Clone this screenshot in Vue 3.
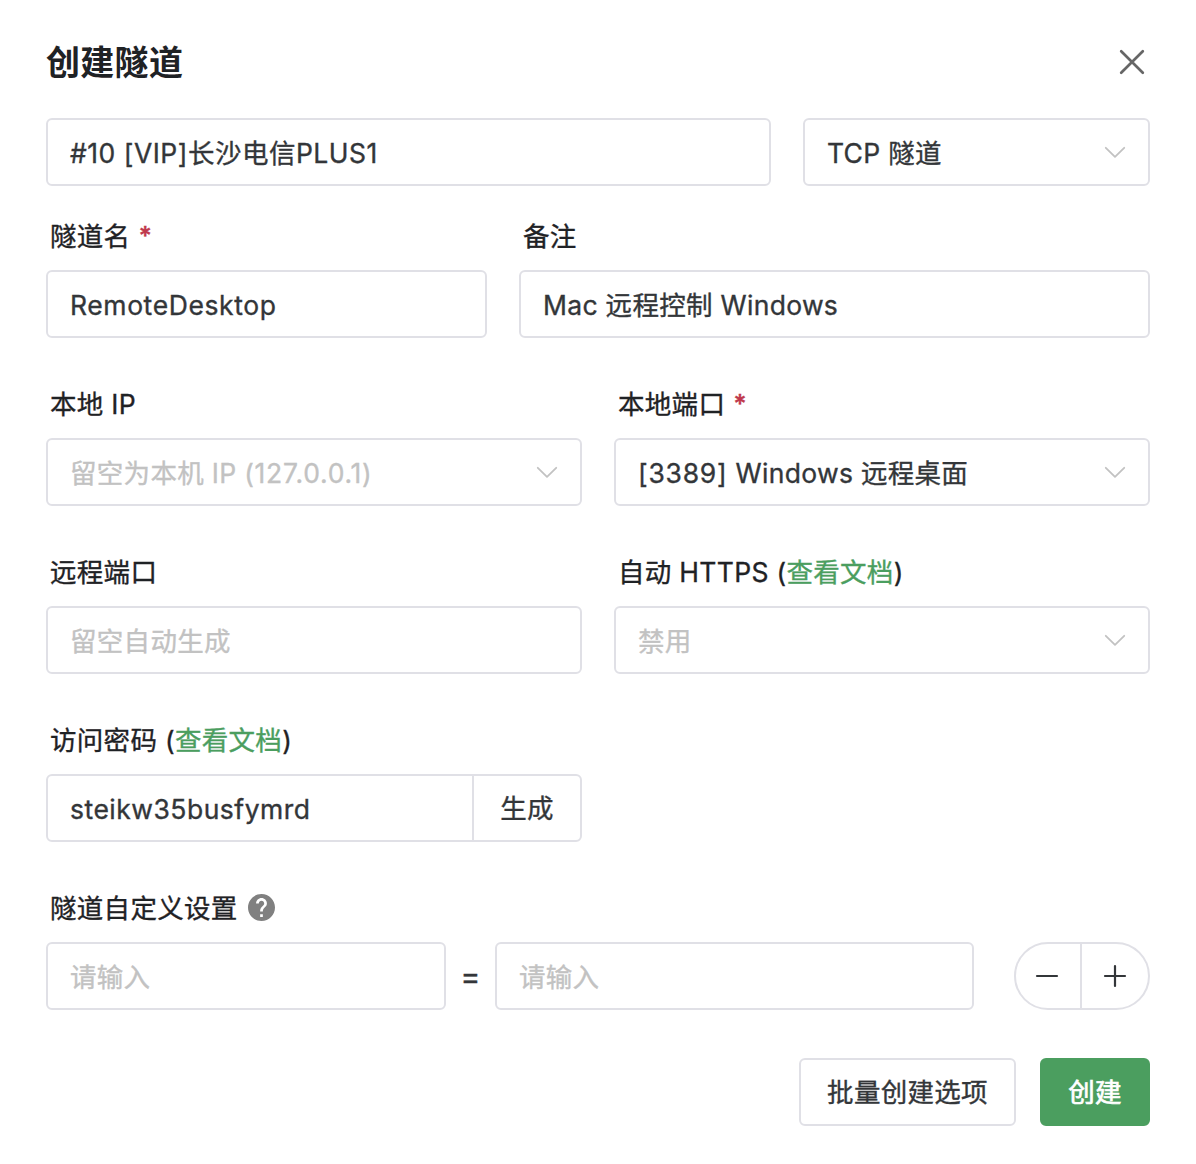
<template>
  <div class="modal">
    <header class="header">
      <h1>创建隧道</h1>
      <svg class="close" viewBox="0 0 28 28"><path d="M3.2 3.2L24.8 24.8M24.8 3.2L3.2 24.8" /></svg>
    </header>

    <div class="row">
      <div class="box node"><span class="loose">#10 [VIP]长沙电信PLUS1</span></div>
      <div class="box type">
        <span>TCP 隧道</span>
        <svg class="arrow" viewBox="0 0 22 12"><path d="M1.8 1.8L11 10.8L20.2 1.8" /></svg>
      </div>
    </div>

    <div class="row labels first">
      <div class="name"><span>隧道名</span><i>*</i></div>
      <div class="remark"><span>备注</span></div>
    </div>
    <div class="row">
      <div class="box name"><span class="wide">RemoteDesktop</span></div>
      <div class="box remark"><span>Mac 远程控制 Windows</span></div>
    </div>

    <template v-for="(group, g) in groups" :key="g">
      <div class="row labels">
        <div v-for="field in group" :key="field.label" class="half">
          <span>{{ field.label }}<template v-if="field.doc"> (<a>查看文档</a>)</template></span>
          <i v-if="field.required">*</i>
        </div>
      </div>
      <div class="row">
        <div v-for="field in group" :key="field.label" class="box half">
          <span :class="{ placeholder: field.empty }"
            ><template v-for="(part, p) in field.parts" :key="p"
              ><span :class="{ digits: /\d/.test(part) }">{{ part }}</span></template
            ></span
          >
          <svg v-if="field.select" class="arrow" viewBox="0 0 22 12"><path d="M1.8 1.8L11 10.8L20.2 1.8" /></svg>
        </div>
      </div>
    </template>

    <div class="row labels">
      <div class="half"><span>访问密码 (<a>查看文档</a>)</span></div>
    </div>
    <div class="row joined">
      <div class="box password"><span class="loose">steikw35busfymrd</span></div>
      <button class="generate"><span>生成</span></button>
    </div>

    <div class="row labels">
      <div class="half">
        <span>隧道自定义设置</span>
        <svg class="help" viewBox="2 2 20 20">
          <path
            d="M12 2C6.48 2 2 6.48 2 12s4.48 10 10 10 10-4.48 10-10S17.52 2 12 2zm1 17h-2v-2h2v2zm2.07-7.75l-.9.92C13.45 12.9 13 13.5 13 15h-2v-.5c0-1.1.45-2.1 1.17-2.83l1.24-1.26c.37-.36.59-.86.59-1.41 0-1.1-.9-2-2-2s-2 .9-2 2H8c0-2.21 1.79-4 4-4s4 1.79 4 4c0 .88-.36 1.68-.93 2.25z"
          />
        </svg>
      </div>
    </div>
    <div class="row settings">
      <div class="box key"><span class="placeholder">请输入</span></div>
      <span class="equals">=</span>
      <div class="box value"><span class="placeholder">请输入</span></div>
      <div class="stepper">
        <button><svg viewBox="0 0 26 26"><path d="M3 13H23" /></svg></button>
        <button><svg viewBox="0 0 26 26"><path d="M3 13H23M13 3V23" /></svg></button>
      </div>
    </div>

    <footer class="footer">
      <button class="batch"><span>批量创建选项</span></button>
      <button class="create"><span>创建</span></button>
    </footer>
  </div>
</template>

<script setup>
const groups = [
  [
    { label: "本地 IP", parts: ["留空为本机 IP ", "(127.0.0.1)"], empty: true, select: true },
    { label: "本地端口", parts: ["[3389] ", "Windows 远程桌面"], required: true, select: true },
  ],
  [
    { label: "远程端口", parts: ["留空自动生成"], empty: true },
    { label: "自动 HTTPS", parts: ["禁用"], doc: true, empty: true, select: true },
  ],
];
</script>

<style>
body {
  margin: 0;
  background: #fff;
}
</style>

<style scoped>
.modal {
  box-sizing: border-box;
  width: 1196px;
  height: 1164px;
  padding: 38px 46px 0;
  color: #333639;
  background: #fff;
  font-family: Inter, "Noto Sans CJK SC", sans-serif;
  font-size: 26.5px;
  line-height: 40px;
  letter-spacing: 0.3px;
  -webkit-text-stroke: 0.35px currentColor;
  overflow: hidden;
  white-space: nowrap;
}
.header {
  display: flex;
  justify-content: space-between;
  height: 80px;
}
h1 {
  margin: 0;
  color: #1f2225;
  font-size: 34px;
  font-weight: 700;
  line-height: 50px;
  -webkit-text-stroke: 0;
}
.close {
  width: 28px;
  height: 28px;
  margin: 10px 4px 0 0;
}
svg {
  display: block;
  flex: none;
  fill: none;
  stroke: #666;
  stroke-width: 2.7;
  stroke-linecap: round;
  stroke-linejoin: round;
}
.row {
  display: flex;
  gap: 32px;
}
.box {
  display: flex;
  box-sizing: border-box;
  align-items: center;
  justify-content: space-between;
  height: 68px;
  padding: 2px 22px 0;
  border: 2px solid #e0e0e6;
  border-radius: 6px;
}
.box span {
  white-space: pre;
}
.loose {
  letter-spacing: 0.5px;
}
.wide {
  letter-spacing: 0.6px;
}
.digits {
  letter-spacing: 0.75px;
}
.node {
  width: 725px;
}
.type {
  width: 347px;
}
.name {
  width: 441px;
}
.remark {
  width: 631px;
}
.half {
  width: 536px;
}
.arrow {
  width: 22px;
  height: 12px;
  margin: -2px 0 0;
  stroke: #c2c2c2;
  stroke-width: 1.8;
}
.labels {
  box-sizing: border-box;
  height: 100px;
  padding-top: 46px;
  color: #1f2225;
}
.labels.first {
  height: 84px;
  padding-top: 30px;
}
.labels > div {
  display: flex;
  box-sizing: border-box;
  padding-left: 4px;
}
i {
  margin-left: 8px;
  color: #c0394d;
  font-size: 25px;
  font-style: normal;
  font-weight: 600;
}
a {
  color: #4b9e5f;
}
.placeholder {
  color: #c2c2c2;
}
button {
  display: flex;
  box-sizing: border-box;
  align-items: center;
  justify-content: center;
  height: 68px;
  padding: 0;
  border: 2px solid #e0e0e6;
  border-radius: 6px;
  color: #333639;
  background: #fff;
  font: inherit;
  letter-spacing: inherit;
}
.joined {
  gap: 0;
}
.password {
  width: 428px;
  border-radius: 6px 0 0 6px;
}
.generate {
  width: 110px;
  margin-left: -2px;
  border-radius: 0 6px 6px 0;
}
.help {
  width: 27px;
  height: 27px;
  margin: 6px 0 0 10px;
  fill: #808080;
  stroke: none;
}
.settings {
  gap: 0;
  align-items: center;
}
.key {
  width: 400px;
}
.equals {
  width: 49px;
  font-size: 30px;
  text-align: center;
}
.value {
  width: 479px;
}
.stepper {
  display: flex;
  margin-left: 40px;
}
.stepper button {
  width: 68px;
  padding-right: 2px;
  border-radius: 34px 0 0 34px;
}
.stepper button + button {
  width: 70px;
  padding-right: 0;
  margin-left: -2px;
  border-radius: 0 34px 34px 0;
}
.stepper svg {
  width: 26px;
  height: 26px;
  stroke: #333639;
  stroke-width: 2.2;
}
.footer {
  display: flex;
  justify-content: flex-end;
  gap: 24px;
  margin-top: 48px;
}
.batch {
  width: 217px;
}
.create {
  width: 110px;
  border-color: #4b9e5f;
  color: #fff;
  background: #4b9e5f;
  -webkit-text-stroke: 0.7px currentColor;
}
</style>
